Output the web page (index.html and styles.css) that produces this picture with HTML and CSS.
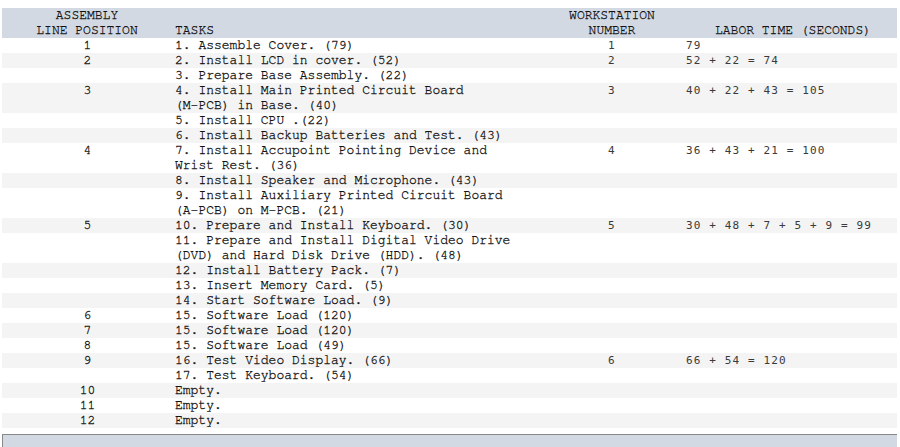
FILE: index.html
```html
<!DOCTYPE html>
<html>
<head>
<meta charset="utf-8">
<link rel="stylesheet" href="styles.css">
</head>
<body>
<div class="page">
<table class="line">
<colgroup>
<col class="c-pos"><col class="c-task"><col class="c-ws"><col class="c-time">
</colgroup>
<thead>
<tr>
<th class="pos">ASSEMBLY<br>LINE POSITION</th>
<th class="task">TASKS</th>
<th class="ws">WORKSTATION<br>NUMBER</th>
<th class="time">LABOR TIME (SECONDS)</th>
</tr>
</thead>
<tbody>
<tr><td class="pos">1</td><td class="task">1. Assemble Cover. (79)</td><td class="ws">1</td><td class="time">79</td></tr>
<tr><td class="pos">2</td><td class="task">2. Install LCD in cover. (52)</td><td class="ws">2</td><td class="time">52 + 22 = 74</td></tr>
<tr><td class="pos"></td><td class="task">3. Prepare Base Assembly. (22)</td><td class="ws"></td><td class="time"></td></tr>
<tr><td class="pos">3</td><td class="task">4. Install Main Printed Circuit Board<br>(M-PCB) in Base. (40)</td><td class="ws">3</td><td class="time">40 + 22 + 43 = 105</td></tr>
<tr><td class="pos"></td><td class="task">5. Install CPU .(22)</td><td class="ws"></td><td class="time"></td></tr>
<tr><td class="pos"></td><td class="task">6. Install Backup Batteries and Test. (43)</td><td class="ws"></td><td class="time"></td></tr>
<tr><td class="pos">4</td><td class="task">7. Install Accupoint Pointing Device and<br>Wrist Rest. (36)</td><td class="ws">4</td><td class="time">36 + 43 + 21 = 100</td></tr>
<tr><td class="pos"></td><td class="task">8. Install Speaker and Microphone. (43)</td><td class="ws"></td><td class="time"></td></tr>
<tr><td class="pos"></td><td class="task">9. Install Auxiliary Printed Circuit Board<br>(A-PCB) on M-PCB. (21)</td><td class="ws"></td><td class="time"></td></tr>
<tr><td class="pos">5</td><td class="task">10. Prepare and Install Keyboard. (30)</td><td class="ws">5</td><td class="time">30 + 48 + 7 + 5 + 9 = 99</td></tr>
<tr><td class="pos"></td><td class="task">11. Prepare and Install Digital Video Drive<br>(DVD) and Hard Disk Drive (HDD). (48)</td><td class="ws"></td><td class="time"></td></tr>
<tr><td class="pos"></td><td class="task">12. Install Battery Pack. (7)</td><td class="ws"></td><td class="time"></td></tr>
<tr><td class="pos"></td><td class="task">13. Insert Memory Card. (5)</td><td class="ws"></td><td class="time"></td></tr>
<tr><td class="pos"></td><td class="task">14. Start Software Load. (9)</td><td class="ws"></td><td class="time"></td></tr>
<tr><td class="pos">6</td><td class="task">15. Software Load (120)</td><td class="ws"></td><td class="time"></td></tr>
<tr><td class="pos">7</td><td class="task">15. Software Load (120)</td><td class="ws"></td><td class="time"></td></tr>
<tr><td class="pos">8</td><td class="task">15. Software Load (49)</td><td class="ws"></td><td class="time"></td></tr>
<tr><td class="pos">9</td><td class="task">16. Test Video Display. (66)</td><td class="ws">6</td><td class="time">66 + 54 = 120</td></tr>
<tr><td class="pos"></td><td class="task">17. Test Keyboard. (54)</td><td class="ws"></td><td class="time"></td></tr>
<tr><td class="pos">10</td><td class="task">Empty.</td><td class="ws"></td><td class="time"></td></tr>
<tr><td class="pos">11</td><td class="task">Empty.</td><td class="ws"></td><td class="time"></td></tr>
<tr><td class="pos">12</td><td class="task">Empty.</td><td class="ws"></td><td class="time"></td></tr>
</tbody>
</table>
<div class="footer"></div>
</div>
</body>
</html>
```
FILE: styles.css
```css
html, body {
  margin: 0;
  padding: 0;
  background: #ffffff;
}
.page {
  padding: 8px 3px 0 2px;
}
.line {
  width: 895px;
  table-layout: fixed;
  border-collapse: collapse;
  border-spacing: 0;
  font-family: "Nimbus Mono PS", "Nimbus Mono L", "FreeMono", "Liberation Mono", "Courier New", monospace;
  font-size: 13px;
  line-height: 15px;
  color: #111111;
  -webkit-text-stroke: 0.3px #111111;
}
.c-pos { width: 170px; }
.c-task { width: 369px; }
.c-ws { width: 142px; }
.c-time { width: 214px; }
.line th, .line td {
  padding: 0;
  vertical-align: top;
  white-space: nowrap;
}
.line thead tr {
  background: #d3d9e3;
}
.line th {
  font-weight: normal;
  vertical-align: bottom;
  color: #1e1e1e;
}
.line th.pos { text-align: center; }
.line th.task { text-align: left; padding-left: 3px; }
.line th.ws { text-align: center; }
.line th.time { text-align: center; padding-left: 6px; }
.line tbody tr:nth-child(even) {
  background: #f4f4f4;
}
.line td.pos { text-align: center; padding-left: 1px; }
.line td.task { padding-left: 3px; }
.line td.ws, .line td.time {
  font-family: "DejaVu Sans Mono", monospace;
  font-size: 11px;
  letter-spacing: 1.13px;
  color: #3a3a3a;
  -webkit-text-stroke: 0;
}
.line td.ws { text-align: center; }
.line td.time { padding-left: 3px; }
.footer {
  margin-top: 6px;
  width: 894px;
  height: 20px;
  background: #d3d9e3;
  border-top: 1px solid #888888;
  border-left: 1px solid #888888;
}
```
